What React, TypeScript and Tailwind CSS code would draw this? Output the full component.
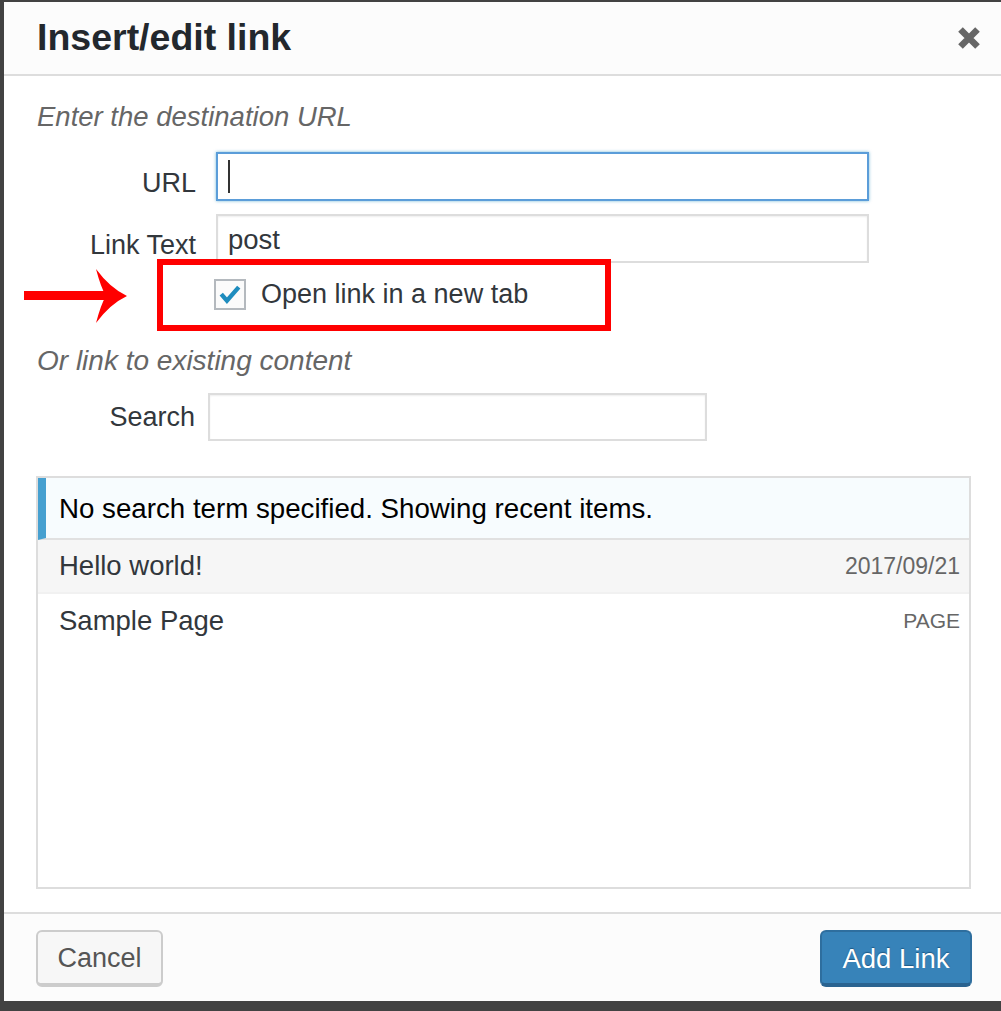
import React from "react";

const font = { fontFamily: '"Liberation Sans", Arial, sans-serif' };

const CloseIcon = () => (
  <svg width="24" height="24" viewBox="0 0 24 24" className="shrink-0">
    <path d="M3.5 3.5 L20.5 20.5 M20.5 3.5 L3.5 20.5" stroke="#666" strokeWidth="6.5" strokeLinecap="butt" />
  </svg>
);

const CheckMark = () => (
  <svg width="32" height="31" viewBox="0 0 32 31">
    <polyline points="6,15 12.5,22.5 26,7" fill="none" stroke="#1e8cbe" strokeWidth="5" strokeLinejoin="miter" />
  </svg>
);

const RedArrow = () => (
  <svg width="140" height="70" viewBox="0 0 140 70" className="absolute left-0 top-[260px]">
    <rect x="24" y="31" width="84" height="9" fill="#ff0000" />
    <path d="M127 36 Q110 28 96 9 Q101 28 106 36 Q101 44 96 63 Q110 44 127 36 Z" fill="#ff0000" />
  </svg>
);

const results = [
  { id: 1, title: "Hello world!", info: "2017/09/21", infoClass: "text-[23px]", rowClass: "bg-[#f6f6f6] border-b-2 border-[#f1f1f1] h-[54px]" },
  { id: 2, title: "Sample Page", info: "PAGE", infoClass: "text-[21px]", rowClass: "bg-white h-[54px]" },
];

export default function App() {
  return (
    <div className="relative w-[1001px] h-[1011px] overflow-hidden bg-[#424242] pt-[2px] pl-[4px]" style={font}>
      <div className="w-[997px] h-[999px] bg-white flex flex-col">
        {/* header */}
        <div className="h-[74px] shrink-0 bg-[#fcfcfc] border-b-2 border-[#dddddd] flex items-center justify-between pl-[33px] pr-[20px]">
          <h1 className="text-[37.5px] leading-none font-bold text-[#23282d]">Insert/edit link</h1>
          <CloseIcon />
        </div>

        {/* body */}
        <div className="flex-1 flex flex-col pl-[32px] pr-[30px]">
          <p className="mt-[25px] ml-[1px] h-[32px] leading-[32px] text-[27.5px] italic text-[#666]">Enter the destination URL</p>

          <div className="mt-[19px] flex items-start">
            <label className="w-[160px] text-right pt-[15px] leading-[32px] text-[27px] text-[#32373c]">URL</label>
            <div className="ml-[20px] w-[653px] h-[49px] border-2 border-[#5b9dd9] bg-white shadow-[0_0_3px_rgba(30,140,190,0.6)] flex items-center pl-[10px]">
              <span className="block w-[2px] h-[33px] bg-[#333]" />
            </div>
          </div>

          <div className="mt-[13px] flex items-start">
            <label className="w-[160px] text-right pt-[15px] leading-[32px] text-[27px] text-[#32373c]">Link Text</label>
            <div className="ml-[20px] w-[653px] h-[49px] border-2 border-[#dddddd] bg-white shadow-[inset_0_1px_2px_rgba(0,0,0,0.07)] flex items-center pl-[10px] pt-[2px] text-[27.5px] text-[#32373c]">
              post
            </div>
          </div>

          <div className="mt-[15px] flex items-center h-[32px]">
            <div className="ml-[178px] w-[32px] h-[31px] border-2 border-[#b4b9be] bg-[#fbfbfb] flex items-center justify-center">
              <CheckMark />
            </div>
            <span className="ml-[15px] pt-[1px] text-[27px] text-[#32373c]">Open link in a new tab</span>
          </div>

          <p className="mt-[35px] ml-[1px] h-[32px] leading-[32px] text-[28px] italic text-[#666]">Or link to existing content</p>

          <div className="mt-[16px] flex items-center">
            <label className="w-[159px] text-right text-[27px] text-[#32373c]">Search</label>
            <div className="ml-[13px] w-[499px] h-[48px] border-2 border-[#dddddd] bg-white shadow-[inset_0_1px_2px_rgba(0,0,0,0.07)]" />
          </div>

          <div className="mt-[35px] h-[413px] border-2 border-[#dddddd] bg-white flex flex-col">
            <div className="h-[62px] shrink-0 bg-[#f7fcfe] border-l-[8px] border-[#46a0d0] border-b-2 border-b-[#e1e1e1] flex items-center pl-[13px] pt-[2px] text-[27.7px] text-black">
              No search term specified. Showing recent items.
            </div>
            {results.map((item) => (
              <div key={item.id} className={"shrink-0 flex items-center justify-between pl-[21px] pr-[9px] " + item.rowClass}>
                <span className="text-[27.5px] text-[#32373c]">{item.title}</span>
                <span className={"text-[#666] " + item.infoClass}>{item.info}</span>
              </div>
            ))}
          </div>
        </div>

        {/* footer */}
        <div className="h-[89px] shrink-0 bg-[#fcfcfc] border-t-2 border-[#dddddd] flex items-start justify-between pl-[32px] pr-[29px] pt-[16px]">
          <button className="w-[127px] h-[57px] rounded-[6px] border-2 border-[#cccccc] border-b-[4px] bg-[#f7f7f7] text-[27px] text-[#555] pt-[2px]">
            Cancel
          </button>
          <button className="w-[152px] h-[57px] rounded-[6px] border-2 border-[#2e6e9e] border-b-[4px] border-b-[#2a6390] bg-[#3783b9] text-[27.5px] text-white pt-[2px] [text-shadow:0_-1px_1px_#1e5a86]">
            Add Link
          </button>
        </div>
      </div>

      {/* annotation overlay */}
      <div className="absolute left-[157px] top-[259px] w-[454px] h-[72px] border-[6px] border-[#ff0000]" />
      <RedArrow />
    </div>
  );
}
